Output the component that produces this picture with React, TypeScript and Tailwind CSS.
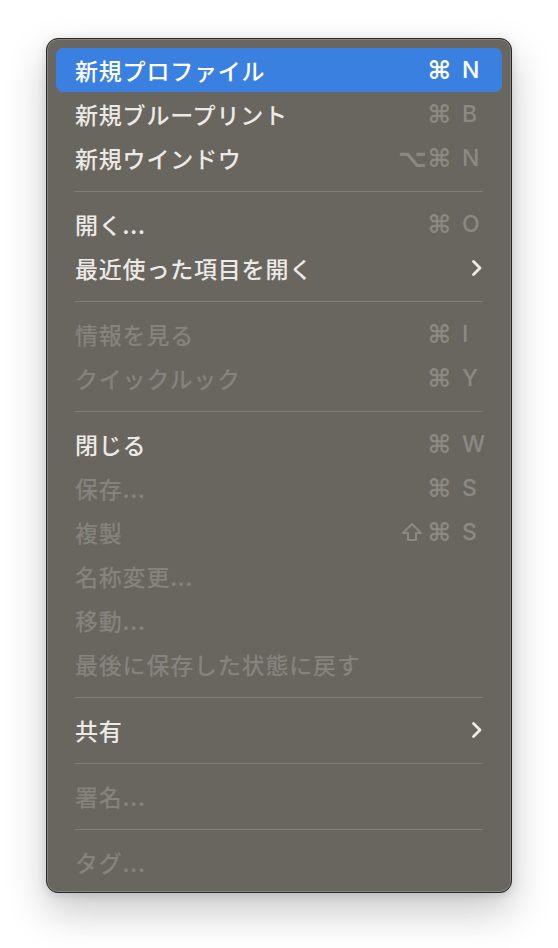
import React from 'react';

type Item =
  | { type: 'sep' }
  | {
      type: 'item';
      label: string;
      mods?: string;
      keyChar?: string;
      disabled?: boolean;
      active?: boolean;
      submenu?: boolean;
    };

const items: Item[] = [
  { type: 'item', label: '新規プロファイル', mods: '⌘', keyChar: 'N', active: true },
  { type: 'item', label: '新規ブループリント', mods: '⌘', keyChar: 'B' },
  { type: 'item', label: '新規ウインドウ', mods: '⌥⌘', keyChar: 'N' },
  { type: 'sep' },
  { type: 'item', label: '開く...', mods: '⌘', keyChar: 'O' },
  { type: 'item', label: '最近使った項目を開く', submenu: true },
  { type: 'sep' },
  { type: 'item', label: '情報を見る', mods: '⌘', keyChar: 'I', disabled: true },
  { type: 'item', label: 'クイックルック', mods: '⌘', keyChar: 'Y', disabled: true },
  { type: 'sep' },
  { type: 'item', label: '閉じる', mods: '⌘', keyChar: 'W' },
  { type: 'item', label: '保存...', mods: '⌘', keyChar: 'S', disabled: true },
  { type: 'item', label: '複製', mods: '⇧⌘', keyChar: 'S', disabled: true },
  { type: 'item', label: '名称変更...', disabled: true },
  { type: 'item', label: '移動...', disabled: true },
  { type: 'item', label: '最後に保存した状態に戻す', disabled: true },
  { type: 'sep' },
  { type: 'item', label: '共有', submenu: true },
  { type: 'sep' },
  { type: 'item', label: '署名...', disabled: true },
  { type: 'sep' },
  { type: 'item', label: 'タグ...', disabled: true },
];

function Chevron() {
  return (
    <svg width="12" height="18" viewBox="0 0 12 18" className="text-[#eeece9]">
      <path d="M2.5 2.5 L9 9 L2.5 15.5" fill="none" stroke="currentColor" strokeWidth="2.8" strokeLinecap="round" strokeLinejoin="round" />
    </svg>
  );
}

// outlined shift arrow, the DejaVu glyph is too small next to ⌘
function ShiftIcon() {
  return (
    <svg width="22" height="20" viewBox="0 0 22 20" className="mr-[5px]">
      <path
        d="M11 2 L20 11 L15 11 L15 18 L7 18 L7 11 L2 11 Z"
        fill="none"
        stroke="currentColor"
        strokeWidth="2"
        strokeLinejoin="round"
      />
    </svg>
  );
}

function MenuRow({ item }: { item: Extract<Item, { type: 'item' }> }) {
  const labelColor = item.active ? 'text-white' : item.disabled ? 'text-[#86827d]' : 'text-[#eceae7]';
  const keyColor = item.active ? 'text-white' : 'text-[#8c8984]';
  const hasShift = item.mods?.includes('⇧');
  const mods = item.mods?.replace('⇧', '');
  return (
    <div
      className={`flex h-[44px] items-center rounded-[7px] pl-[19px] ${item.active ? 'bg-[#3a80e0]' : ''}`}
    >
      <span className={`flex-1 tracking-[0.8px] ${labelColor}`}>{item.label}</span>
      {item.keyChar && (
        <div className={`flex h-full items-center ${keyColor}`}>
          {hasShift && <ShiftIcon />}
          <span className="mr-[10px] text-[25px] leading-none font-bold tracking-[1px] font-['DejaVu_Sans',sans-serif]">
            {mods}
          </span>
          <span className="w-[40px] text-[23px] leading-none font-['Inter',sans-serif] font-medium">{item.keyChar}</span>
        </div>
      )}
      {item.submenu && (
        <div className="flex pr-[19px]">
          <Chevron />
        </div>
      )}
    </div>
  );
}

export default function App() {
  return (
    <div className="min-h-[948px] bg-white pl-[46px] pt-[38px]">
      <div className="w-[466px] rounded-[12px] border border-[#2a2927] bg-[#69655f] px-[9px] pb-[8px] pt-[9px] text-[23px] font-medium font-['Noto_Sans_CJK_JP','Noto_Sans',sans-serif] shadow-[inset_0_0_0_1px_#86827c,0_18px_40px_rgba(0,0,0,0.22),0_2px_10px_rgba(0,0,0,0.12)]">
        {items.map((item, i) =>
          item.type === 'sep' ? (
            <div key={i} className="flex h-[22px] items-center px-[19px]">
              <div className="h-px w-full bg-[#817d78]" />
            </div>
          ) : (
            <MenuRow key={i} item={item} />
          )
        )}
      </div>
    </div>
  );
}
